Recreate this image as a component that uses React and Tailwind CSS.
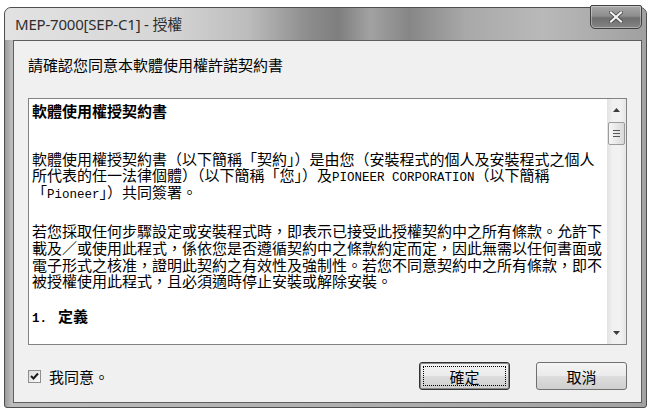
import React from 'react'

const cjk = "font-['Noto_Sans_CJK_TC','Noto_Sans_CJK_SC',sans-serif]"

function Mono({ children }) {
    return <span className="font-['Liberation_Mono',monospace] text-[12.5px]">{children}</span>
}

function Line({ children, bold }) {
    return (
        <div className={`whitespace-nowrap h-[16.6px] leading-[16.6px] ${bold ? 'font-bold' : ''}`}>{children}</div>
    )
}

function Button({ label, isDefault }) {
    return (
        <div
            className={`w-[91px] h-[28px] rounded-[3px] border ${isDefault ? 'border-[#333] shadow-[inset_0_0_0_1px_#8a8a8a]' : 'border-[#707070]'} bg-[image:linear-gradient(180deg,#f4f4f4_0%,#ebebeb_48%,#dddddd_52%,#cfcfcf_100%)] p-[3px] flex`}
        >
            <div className={`flex-1 flex items-center justify-center text-[15px] leading-none text-black ${isDefault ? 'border border-dotted border-black' : ''}`}>
                {label}
            </div>
        </div>
    )
}

function ScrollBar() {
    return (
        <div className="w-[19px] bg-[image:linear-gradient(90deg,#e2e2e2_0%,#f1f1f1_30%,#f1f1f1_70%,#e6e6e6_100%)] flex flex-col items-center">
            <div className="h-[20px] flex items-center justify-center pt-[2px]">
                <svg width="7" height="4" viewBox="0 0 7 4"><path d="M3.5 0 L7 4 L0 4 Z" fill="#3c3c3c" /></svg>
            </div>
            <div className="mt-[3px] w-[17px] h-[23px] rounded-[2px] border border-[#9b9b9b] bg-[image:linear-gradient(90deg,#f6f6f6_0%,#e8e8e8_50%,#d9d9d9_100%)] flex flex-col items-center justify-center gap-[2px]">
                <div className="w-[7px] h-px bg-[#555]" />
                <div className="w-[7px] h-px bg-[#555]" />
                <div className="w-[7px] h-px bg-[#555]" />
            </div>
            <div className="flex-1" />
            <div className="h-[20px] flex items-center justify-center pb-[2px]">
                <svg width="7" height="4" viewBox="0 0 7 4"><path d="M0 0 L7 0 L3.5 4 Z" fill="#3c3c3c" /></svg>
            </div>
        </div>
    )
}

export default function App() {
    return (
        <div className={`w-[650px] h-[412px] bg-white relative overflow-hidden ${cjk}`}>
            {/* window */}
            <div className="absolute left-[4px] top-[7px] w-[643px] h-[401px] rounded-t-[7px] rounded-b-[3px] border border-[#4e4e4e] bg-[#aeaeae] bg-[image:linear-gradient(90deg,#9c9c9c_0%,#bcbcbc_1%,#b0b0b0_50%,#a2a2a2_100%)] flex flex-col">
                {/* title bar */}
                <div className="h-[32px] rounded-t-[6px] bg-[#c8c8c8] bg-[image:linear-gradient(90deg,#e2e2e2_0%,#d6d6d6_25%,#bcbcbc_38%,#8e8e8e_47%,#7e7e7e_52%,#a2a2a2_57%,#868686_63%,#a9a9a9_72%,#b9b9b9_84%,#a0a0a0_100%)] flex items-center pl-[10px]">
                    <span className="font-['Noto_Sans','Noto_Sans_CJK_TC',sans-serif] text-[15px] text-[#2e2e2e] tracking-[-0.2px] mt-[1px]">
                        MEP-7000[SEP-C1] - 授權
                    </span>
                </div>
                {/* client area */}
                <div className="flex-1 ml-[8px] mr-[4px] mb-[4px] bg-[#f0f0f0] border border-[#5e5e5e] px-[14px] flex flex-col">
                    <div className="h-[57px] pt-[15px] text-[15px] leading-[18px] text-black">
                        請確認您同意本軟體使用權許諾契約書
                    </div>
                    <div className="h-[247px] border border-[#828282] bg-white flex">
                        <div className="flex-1 overflow-hidden pl-[3px] pt-[4px] text-[15px] text-black">
                            <Line bold>軟體使用權授契約書</Line>
                            <div className="mt-[31px]">
                                <Line>軟體使用權授契約書（以下簡稱「契約」）是由您（安裝程式的個人及安裝程式之個人</Line>
                                <Line>所代表的任一法律個體）（以下簡稱「您」）及<Mono>PIONEER CORPORATION</Mono>（以下簡稱</Line>
                                <Line>「<Mono>Pioneer</Mono>」）共同簽署。</Line>
                            </div>
                            <div className="mt-[23px]">
                                <Line>若您採取任何步驟設定或安裝程式時，即表示已接受此授權契約中之所有條款。允許下</Line>
                                <Line>載及／或使用此程式，係依您是否遵循契約中之條款約定而定，因此無需以任何書面或</Line>
                                <Line>電子形式之核准，證明此契約之有效性及強制性。若您不同意契約中之所有條款，即不</Line>
                                <Line>被授權使用此程式，且必須適時停止安裝或解除安裝。</Line>
                            </div>
                            <div className="mt-[18px]">
                                <Line bold><Mono>1.</Mono><span className="ml-[11px]">定義</span></Line>
                            </div>
                        </div>
                        <ScrollBar />
                    </div>
                    <div className="mt-[17px] h-[28px] flex items-center">
                        <div className="w-[13px] h-[13px] border border-[#8e8e8e] bg-[image:linear-gradient(135deg,#dcdcdc,#fafafa)] p-[1px] flex items-center justify-center">
                            <svg width="9" height="8" viewBox="0 0 9 8">
                                <path d="M1 4 L3.5 6.5 L8 1.5" stroke="#1a1a1a" strokeWidth="2" fill="none" />
                            </svg>
                        </div>
                        <span className="ml-[8px] text-[15px] leading-none text-black">我同意。</span>
                        <div className="ml-auto flex gap-[26px]">
                            <Button label="確定" isDefault />
                            <Button label="取消" />
                        </div>
                    </div>
                </div>
            </div>
            {/* close button */}
            <div className="absolute left-[590px] top-[5px] w-[52px] h-[24px] rounded-b-[5px] rounded-t-[2px] border border-[#404040] bg-[#888] bg-[image:linear-gradient(180deg,#a8a8a8_0%,#8e8e8e_45%,#6e6e6e_55%,#858585_100%)] shadow-[inset_0_0_0_1px_rgba(255,255,255,0.35)] flex items-center justify-center">
                <svg width="14" height="12" viewBox="0 0 14 12">
                    <path d="M2 1.5 L12 10.5 M12 1.5 L2 10.5" stroke="#3a3a3a" strokeWidth="3.6" strokeLinecap="square" />
                    <path d="M2 1.5 L12 10.5 M12 1.5 L2 10.5" stroke="#f4f4f4" strokeWidth="2.2" strokeLinecap="square" />
                </svg>
            </div>
        </div>
    )
}
